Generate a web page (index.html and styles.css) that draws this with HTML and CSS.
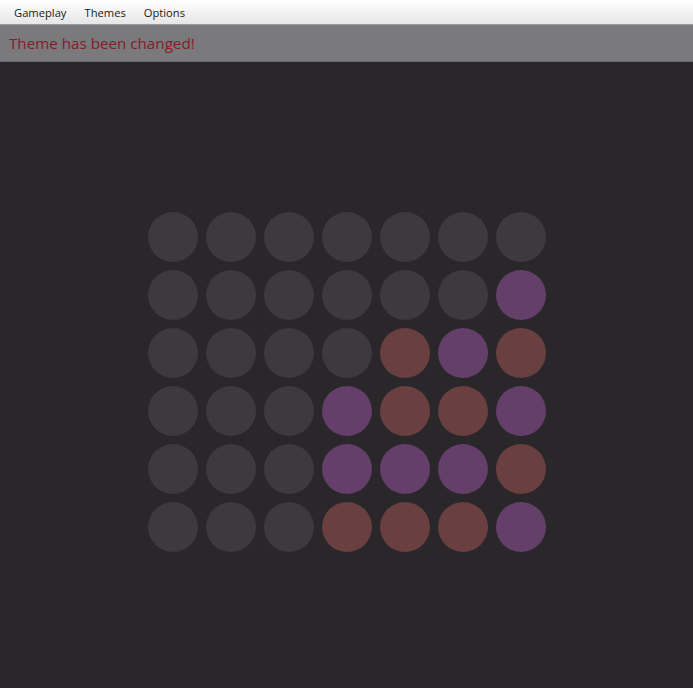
FILE: index.html
```html
<!DOCTYPE html>
<html>
<head>
<meta charset="utf-8">
<link rel="stylesheet" href="styles.css">
</head>
<body>
<div class="menubar">
  <span class="menu">Gameplay</span>
  <span class="menu">Themes</span>
  <span class="menu">Options</span>
</div>
<div class="notice">Theme has been changed!</div>
<main class="stage">
  <div class="board">
    <div class="cell"></div><div class="cell"></div><div class="cell"></div><div class="cell"></div><div class="cell"></div><div class="cell"></div><div class="cell"></div>
    <div class="cell"></div><div class="cell"></div><div class="cell"></div><div class="cell"></div><div class="cell"></div><div class="cell"></div><div class="cell p"></div>
    <div class="cell"></div><div class="cell"></div><div class="cell"></div><div class="cell"></div><div class="cell b"></div><div class="cell p"></div><div class="cell b"></div>
    <div class="cell"></div><div class="cell"></div><div class="cell"></div><div class="cell p"></div><div class="cell b"></div><div class="cell b"></div><div class="cell p"></div>
    <div class="cell"></div><div class="cell"></div><div class="cell"></div><div class="cell p"></div><div class="cell p"></div><div class="cell p"></div><div class="cell b"></div>
    <div class="cell"></div><div class="cell"></div><div class="cell"></div><div class="cell b"></div><div class="cell b"></div><div class="cell b"></div><div class="cell p"></div>
  </div>
</main>
</body>
</html>
```
FILE: styles.css
```css
html, body {
  margin: 0;
  padding: 0;
  height: 100%;
}
body {
  background: #29272a;
  font-family: "Open Sans", "Noto Sans", sans-serif;
  display: flex;
  flex-direction: column;
  overflow: hidden;
}
.menubar {
  height: 24px;
  display: flex;
  align-items: center;
  padding-left: 5px;
  background: linear-gradient(#ffffff, #e6e6e6);
  border-bottom: 1px solid #9a9a9a;
}
.menu {
  font-size: 11.2px;
  color: #1a1a1a;
  padding: 0 9px;
}
.notice {
  height: 36px;
  background: #7a797b;
  color: #861b2a;
  font-size: 15.2px;
  display: flex;
  align-items: center;
  padding-left: 9px;
  border-bottom: 1px solid #6a696b;
}
.stage {
  flex: 1;
  display: flex;
  justify-content: center;
  padding-top: 150px;
}
.board {
  display: grid;
  grid-template-columns: repeat(7, 50px);
  grid-auto-rows: 50px;
  gap: 8px;
  align-self: flex-start;
}
.cell {
  border-radius: 50%;
  background: #3d393f;
}
.cell.p {
  background: #643f6a;
}
.cell.b {
  background: #693f40;
}
```
